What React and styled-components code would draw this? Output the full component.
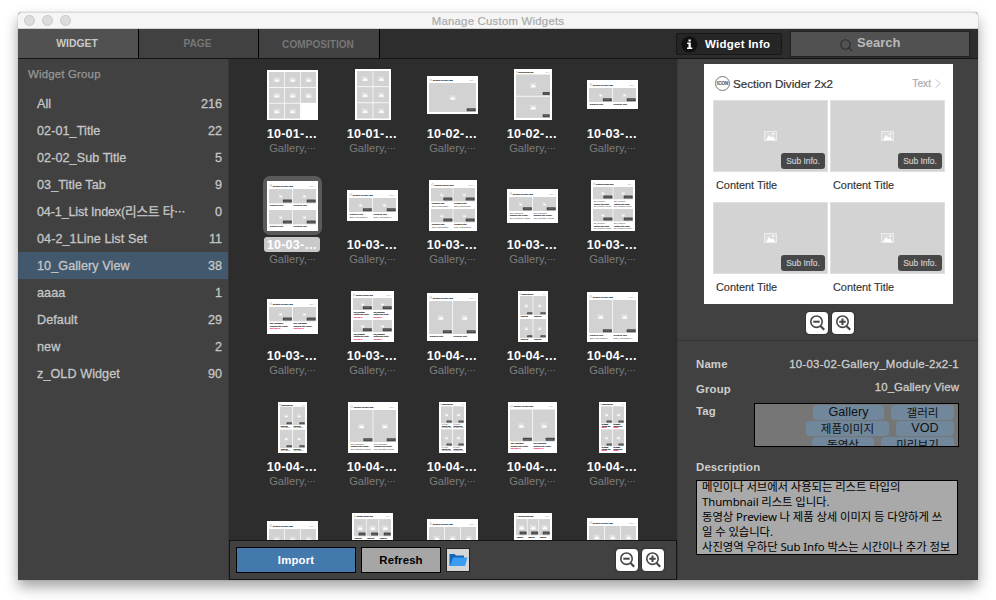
import React from 'react';
import styled, { createGlobalStyle } from 'styled-components';

const Global = createGlobalStyle`
  * { box-sizing: border-box; }
  html, body { margin: 0; background: #fff; }
  body {
    width: 996px; height: 600px; overflow: hidden;
    font-family: "Liberation Sans", "Noto Sans CJK KR", sans-serif;
  }
  svg { display: block; flex: none; }
`;

const Page = styled.div`
  width: 996px; height: 600px; overflow: hidden;
  padding: 12px 18px 20px;
`;
const Window = styled.div`
  height: 568px; display: flex; flex-direction: column;
  background: #414141;
  border-radius: 4px 4px 0 0;
  box-shadow: 0 0 1px rgba(0,0,0,.45), 0 7px 14px rgba(0,0,0,.36);
`;
const TitleBar = styled.header`
  height: 17px; flex: none; display: grid; align-items: center;
  grid-template-columns: 60px 1fr 60px; padding-left: 6px; padding-right: 6px;
  background: #f5f5f5; border-top: 1px solid #dcdcdc; border-bottom: 1px solid #cfd3cf;
  border-radius: 4px 4px 0 0;
`;
const Lights = styled.div`display: flex; gap: 7px;`;
const Light = styled.span`
  width: 11px; height: 11px; border-radius: 50%;
  background: #dcdcdc; border: 1px solid #c8c8c8;
`;
const WindowTitle = styled.div`
  text-align: center; font-size: 11.4px; letter-spacing: .22px; color: #a9a9a9;
  -webkit-text-stroke: .2px; line-height: 14px;
`;
const Toolbar = styled.nav`
  height: 30px; flex: none; display: flex; background: #2d2d2d; border-bottom: 1px solid #161616;
`;
const Tab = styled.div`
  width: ${p => p.$w || 120}px; border-right: 1px solid #000;
  background: ${p => (p.$on ? '#515151' : '#414141')};
  color: ${p => (p.$on ? '#c9c9c9' : '#777')};
  font-weight: bold; font-size: ${p => p.$size || 10.4}px;
  display: flex; align-items: center; justify-content: center;
  padding: ${p => p.$drop || 0}px 2px 0 0;
`;
const InfoButton = styled.div`
  width: 106px; height: 22px; margin: 4px 8px 0 auto; padding-left: 4px;
  display: flex; align-items: center; gap: 7px;
  background: #252525; border: 1px solid #181818; border-radius: 2px;
  color: #fff; font-weight: bold; font-size: 11.5px; letter-spacing: .25px;
`;
const SearchBox = styled.div`
  width: 180px; height: 26px; margin: 2px 8px 0 0; padding-left: 48px;
  display: flex; gap: 4px; background: #515151; border: 1px solid #222;
  color: #bababa; font-weight: bold; font-size: 13px; line-height: 21px;
  svg { margin-top: 6px; }
`;
const Body = styled.div`flex: 1; min-height: 0; display: flex;`;

const Sidebar = styled.aside`width: 211px; flex: none; background: #414141; border-right: 1px solid #383838;`;
const SideTitle = styled.div`
  height: 31px; padding: 0 10px; line-height: 31px; font-size: 11.4px; letter-spacing: .2px;
  color: #989898; -webkit-text-stroke: .25px;
`;
const GroupRow = styled.div`
  height: 27px; padding: 0 6px 0 19px; display: flex; align-items: center; justify-content: space-between;
  background: ${p => (p.$on ? '#41586d' : 'transparent')};
  color: #c6c6c6; font-size: 12.6px; line-height: 16px; white-space: nowrap;
  -webkit-text-stroke: .3px;
`;
const GroupName = styled.span`letter-spacing: ${p => (p.$tight ? -0.14 : 0.08)}px;`;

const Center = styled.main`width: 448px; flex: none; display: flex; flex-direction: column; background: #2d2d2d;`;
const Gallery = styled.div`
  flex: 1; min-height: 0; overflow: hidden; padding: 10px 0 0 38px;
  display: grid; grid-template-columns: repeat(5, 51px); column-gap: 29px; grid-auto-rows: 111px;
`;
const Card = styled.div`display: flex; flex-direction: column; align-items: center;`;
const ThumbSlot = styled.div`
  width: 51px; height: 51px; display: flex; align-items: center; justify-content: center;
  background: ${p => (p.$on ? '#5a5a5a' : 'none')};
  box-shadow: ${p => (p.$on ? '0 0 0 4px #5a5a5a' : 'none')};
  border-radius: 3px; flex: none;
`;
const CardTitle = styled.div`
  width: 56px; height: 15px; margin: 6px 1px 0 0; flex: none; text-align: center;
  line-height: 16px; font-size: 12.6px; letter-spacing: .2px; font-weight: bold; color: #fff; white-space: nowrap;
  background: ${p => (p.$on ? '#c9c9c9' : 'none')}; border-radius: 3px;
`;
const CardSub = styled.div`
  height: 15px; line-height: 15px; font-size: 11.2px; color: #7e7e7e; white-space: nowrap;
  display: flex; align-items: center;
`;
const Dots = styled.span`font-family: "Noto Sans CJK KR", sans-serif; font-size: ${p => p.$size || 9}px; letter-spacing: 0;`;

const Footer = styled.footer`
  height: 40px; flex: none; display: flex; align-items: center; padding: 0 12px 0 6px;
  background: #414141; border: 1px solid #151515;
`;
const Button = styled.div`
  width: ${p => p.$w}px; height: 26px; margin-right: 5px; border: 1px solid #000;
  display: flex; align-items: center; justify-content: center;
  font-weight: bold; font-size: 11.4px; letter-spacing: .15px;
  background: ${p => (p.$primary ? '#4479ad' : '#a6a6a6')};
  color: ${p => (p.$primary ? '#fff' : '#000')};
`;
const FolderButton = styled.div`
  width: 24px; height: 24px; margin-right: auto; border: 1px solid #222; background: #d6d6d6;
  display: flex; align-items: center; justify-content: center;
`;
const ZoomPair = styled.div`display: flex; gap: 4px; justify-content: center; padding-left: ${p => p.$shift || 0}px;`;
const ZoomButton = styled.div`
  width: 22px; height: 22px; background: #fff; border-radius: 4px; box-shadow: 0 0 1px 1px #333;
`;

const Inspector = styled.section`width: 301px; flex: none; display: flex; flex-direction: column; background: #414141; border-left: 1px solid #383838;`;
const PreviewPane = styled.div`height: 282px; flex: none; padding: 5px 25px 0 26px; border-bottom: 1px solid #333;`;
const Preview = styled.div`
  width: 249px; height: 240px; background: #fff; padding: 0 8px 0 9px; margin-bottom: 8px; color: #333;
`;
const PreviewHead = styled.div`
  height: 36px; padding: 3px 4px 0 2px; display: flex; align-items: center; font-size: 11.6px;
  -webkit-text-stroke: .2px;
`;
const PreviewIcon = styled.span`
  width: 15px; height: 15px; border: 1px solid #777; border-radius: 50%; margin-right: 3px;
  font-size: 4.5px; font-weight: bold; display: flex; align-items: center; justify-content: center; color: #666;
`;
const MoreText = styled.span`margin-left: auto; font-size: 10.2px; color: #aaa; display: flex; gap: 4px; align-items: center;`;
const Tiles = styled.div`display: grid; grid-template-columns: 115px 115px; column-gap: 2px; grid-auto-rows: 102px;`;
const TileImage = styled.div`
  position: relative; height: 71.5px; background: #d3d3d3; border: 1px solid #e0e0e0; display: flex;
  align-items: center; justify-content: center;
`;
const Badge = styled.span`
  position: absolute; right: 2px; bottom: 2px; width: 44px; height: 16px; border-radius: 3px;
  background: #474747; color: #ccc; font-size: 8.4px; line-height: 16px; text-align: center;
  -webkit-text-stroke: .2px;
`;
const TileTitle = styled.div`padding-left: 3px; font-size: 10.9px; line-height: 27px; -webkit-text-stroke: .15px;`;

const Details = styled.div`padding: 11px 19px 0 18px;`;
const Field = styled.div`
  height: ${p => p.$h}px; display: flex; justify-content: space-between; align-items: flex-start;
  line-height: 24px;
`;
const Label = styled.div`font-weight: bold; font-size: 11.4px; letter-spacing: .15px; color: #cdcdcd;`;
const Value = styled.div`
  font-size: 11.4px; letter-spacing: ${p => p.$ls || 0.29}px; color: #cdcdcd; -webkit-text-stroke: .3px;
  line-height: ${p => p.$lh || 24}px;
`;
const TagBox = styled.div`
  width: 205px; height: 44px; margin-top: 4px; padding: 1px 4px 0 0; overflow: hidden; border: 1px solid #000; background: #767676;
`;
const TagLine = styled.div`display: flex; justify-content: flex-end; gap: 7px; height: 16px;`;
const Tag = styled.span`
  width: ${p => p.$w}px; height: 15px; border-radius: 4px; background: #70879c; color: #111;
  font-size: ${p => (p.$ko ? 11.6 : 12.6)}px; line-height: 15px; text-align: center; white-space: nowrap;
`;
const Description = styled.div`
  width: 262px; height: 75px; overflow: hidden; border: 1px solid #000; background: #a9a9a9;
  padding-left: 5px; color: #000; white-space: pre; line-height: 15px; font-size: 11.4px;
  letter-spacing: -.1px;
  font-family: "Noto Sans", "Noto Sans CJK KR", sans-serif;
`;
const DescriptionText = styled.div`margin-top: -2px;`;

const ZoomIcon = ({ plus }) => (
  <svg width="22" height="22" viewBox="0 0 22 22" fill="none" stroke="#444">
    <circle cx="10.5" cy="9.7" r="5.7" strokeWidth="1.6" />
    <path d="M14.500 14l3.700 3.800" strokeWidth="2.1" />
    <path d={plus ? 'M7.3 9.7h6.4M10.5 6.5v6.4' : 'M7.3 9.7h6.4'} strokeWidth="2" />
  </svg>
);
const ZoomButtons = ({ shift }) => (
  <ZoomPair $shift={shift}>
    <ZoomButton><ZoomIcon /></ZoomButton>
    <ZoomButton><ZoomIcon plus /></ZoomButton>
  </ZoomPair>
);

const PictureIcon = () => (
  <svg width="13" height="10" viewBox="0 0 13 10">
    <rect x=".5" y=".5" width="12" height="9" fill="#dcdcdc" stroke="#ececec" />
    <path d="M2 9l3-5 2.2 2.6L9 5.3 11.3 9z" fill="#fff" />
    <circle cx="9.3" cy="3" r="1" fill="#fff" />
  </svg>
);

const Thumb = ({ w, h, hd = 0, cols = 2, rows = 1, ch, pitch, lines = 0, pink, skip }) => {
  const top = hd || 2;
  const cw = (w - 4 - (cols - 1) * 0.7) / cols;
  const cells = [];
  for (let r = 0; r < rows; r++) for (let c = 0; c < cols; c++) {
    if (skip && r * cols + c === skip) continue;
    cells.push({ x: 2 + c * (cw + 0.7), y: top + r * (pitch || ch + 0.8) });
  }
  const small = w < 32;
  const bw = small ? 5.3 : w < 42 ? 7 : 9;
  const bh = small ? 2 : 3;
  const step = small ? 1.5 : lines > 2 ? 2.6 : 2.9;
  const words = lines === 3 ? ['Sub_Information', 'Content Title Conte..', 'Sub_Information, Informa'] : ['Content Title', 'Sub_Information'];
  if (pink) words[2] = '100,000 ₩';
  const head = w / 249 * 11.4;
  return (
    <svg width={w} height={h} viewBox={`0 0 ${w} ${h}`} fontFamily="Liberation Sans">
      <rect width={w} height={h} fill="#fff" />
      {hd > 0 && (
        <g>
          <circle cx={w * 0.075} cy={hd * 0.57} r={hd * 0.13} fill="none" stroke="#999" strokeWidth=".4" />
          <text x={w * 0.115} y={hd * 0.57 + 1} fontSize={head} fill="#222" stroke="#222" strokeWidth=".12">Section Divider 2x2</text>
          <text x={w * 0.83} y={hd * 0.57 + 1} fontSize={head * 0.9} fill="#888">Text &gt;</text>
        </g>
      )}
      {cells.map((p, i) => {
        const mx = p.x + cw / 2, my = p.y + ch / 2;
        const k = small || (ch < 15 && hd) ? 0.6 : 1;
        return (
          <g key={i}>
            <rect x={p.x} y={p.y} width={cw} height={ch} fill="#d2d2d2" />
            <rect x={mx - 3 * k} y={my - 2.2 * k} width={6 * k} height={4.8 * k} fill="#e0e0e0" />
            <path d={`M${mx - 2.4 * k} ${my + 2 * k}l${2 * k} ${-2.6 * k} ${1.4 * k} ${k} ${0.9 * k} ${-0.6 * k} ${0.8 * k} ${2.2 * k}z`} fill="#fff" />
            {hd > 0 && (
              <g>
                <rect x={p.x + cw - bw - 0.3} y={p.y + ch - bh - 0.7} width={bw} height={bh} rx=".5" fill="#484848" />
                <rect x={p.x + cw - bw + 1.2} y={p.y + ch - bh / 2 - 1} width={bw - 3} height=".6" fill="#777" />
              </g>
            )}
            {words.slice(0, lines).map((t, n) => {
              const strong = lines === 3 ? n === 1 : n === 0;
              const size = lines === 3 ? (strong ? 0.092 : pink && n === 2 ? 0.095 : 0.079) : 0.105;
              return (
                <text key={t} x={p.x + 0.7} y={p.y + ch + (small ? 1.7 : 2.7) + n * step}
                  fontSize={cw * size} fill={pink && n === 2 ? '#f0306a' : '#222'}
                  stroke={pink && n === 2 ? '#f0306a' : '#222'} strokeWidth={strong || pink ? 0.12 : 0}>
                  {t}
                </text>
              );
            })}
          </g>
        );
      })}
    </svg>
  );
};

const items = [
  ['10-01-…', { w: 51, h: 50, cols: 3, rows: 3, ch: 15, skip: 8 }],
  ['10-01-…', { w: 36, h: 51, cols: 2, rows: 3, ch: 15.3 }],
  ['10-02-…', { w: 51, h: 38, hd: 7, cols: 1, ch: 29 }],
  ['10-02-…', { w: 38, h: 51, hd: 5.5, cols: 1, rows: 2, ch: 21.3 }],
  ['10-03-…', { w: 51, h: 29, hd: 8, ch: 14, lines: 1 }],
  ['10-03-…', { w: 51, h: 50, hd: 8, rows: 2, ch: 14.3, pitch: 21, lines: 1 }],
  ['10-03-…', { w: 51, h: 31, hd: 8, ch: 14, lines: 2 }],
  ['10-03-…', { w: 48, h: 51, hd: 8, rows: 2, ch: 13.3, pitch: 21, lines: 2 }],
  ['10-03-…', { w: 51, h: 34, hd: 8, ch: 14, lines: 3 }],
  ['10-03-…', { w: 44, h: 51, hd: 7, rows: 2, ch: 12.3, pitch: 22, lines: 3 }],
  ['10-03-…', { w: 51, h: 35, hd: 8, ch: 14.3, lines: 3, pink: true }],
  ['10-03-…', { w: 43, h: 51, hd: 7, rows: 2, ch: 12, pitch: 22, lines: 3, pink: true }],
  ['10-04-…', { w: 51, h: 48, hd: 8, ch: 33, lines: 1 }],
  ['10-04-…', { w: 30, h: 51, hd: 5, rows: 2, ch: 19, pitch: 23, lines: 1 }],
  ['10-04-…', { w: 51, h: 50, hd: 8, ch: 33, lines: 2 }],
  ['10-04-…', { w: 29, h: 51, hd: 4.7, rows: 2, ch: 18.3, pitch: 23, lines: 2 }],
  ['10-04-…', { w: 50, h: 51, hd: 8, ch: 32, lines: 3 }],
  ['10-04-…', { w: 27, h: 51, hd: 4.3, rows: 2, ch: 17, pitch: 23, lines: 3 }],
  ['10-04-…', { w: 49, h: 51, hd: 7.5, ch: 32, lines: 3, pink: true }],
  ['10-04-…', { w: 27, h: 51, hd: 4.3, rows: 2, ch: 17, pitch: 23, lines: 3, pink: true }],
  ['10-05-…', { w: 51, h: 35, hd: 8, cols: 3, ch: 20 }],
  ['10-05-…', { w: 41, h: 51, hd: 6, cols: 3, ch: 17.3, pitch: 23, lines: 1 }],
  ['10-05-…', { w: 51, h: 39, hd: 8, cols: 3, ch: 22 }],
  ['10-05-…', { w: 38, h: 51, hd: 6, cols: 3, ch: 16.3, pitch: 23, lines: 1 }],
  ['10-05-…', { w: 51, h: 41, hd: 8, cols: 3, ch: 22 }],
];

const groups = [
  ['All', 216], ['02-01_Title', 22], ['02-02_Sub Title', 5], ['03_Title Tab', 9],
  ['04-1_List Index(리스트 타', 0, true], ['04-2_1Line List Set', 11], ['10_Gallery View', 38],
  ['aaaa', 1], ['Default', 29], ['new', 2], ['z_OLD Widget', 90],
];
const tags = [
  [['Gallery', 71], ['갤러리', 63, true]],
  [['제품이미지', 83, true], ['VOD', 58]],
  [['동영상', 62, true], ['미리보기', 73, true]],
];
const description = `메인이나 서브에서 사용되는 리스트 타입의
Thumbnail 리스트 입니다.
동영상 Preview 나 제품 상세 이미지 등 다양하게 쓰
일 수 있습니다.
사진영역 우하단 Sub Info 박스는 시간이나 추가 정보`;

export default function App() {
  return (
    <Page>
      <Global />
      <Window>
        <TitleBar>
          <Lights><Light /><Light /><Light /></Lights>
          <WindowTitle>Manage Custom Widgets</WindowTitle>
        </TitleBar>
        <Toolbar>
          <Tab $on $w={121}>WIDGET</Tab>
          <Tab $size={10.2}>PAGE</Tab>
          <Tab $w={121} $size={10.1} $drop={2}>COMPOSITION</Tab>
          <InfoButton>
            <svg width="17" height="17" viewBox="0 0 17 17">
              <circle cx="8.5" cy="8.5" r="8" fill="#101010" />
              <path d="M7.5 3.5h2.3v2H7.5zM6.2 6.5h3.6v5h1.5V13H6v-1.500h1.500V8H6.200z" fill="#fff" />
            </svg>
            Widget Info
          </InfoButton>
          <SearchBox>
            <svg width="14" height="14" viewBox="0 0 14 14" fill="none" stroke="#2c2c2c" strokeWidth="1.1">
              <circle cx="6.500" cy="6.500" r="4.700" /><path d="M10 10l3 3" />
            </svg>
            Search
          </SearchBox>
        </Toolbar>
        <Body>
          <Sidebar>
            <SideTitle>Widget Group</SideTitle>
            {groups.map(([name, count, cut]) => (
              <GroupRow key={name} $on={count === 38}>
                <GroupName $tight={cut}>{name}{cut && <Dots $size={11}>⋯</Dots>}</GroupName>
                <span>{count}</span>
              </GroupRow>
            ))}
          </Sidebar>
          <Center>
            <Gallery>
              {items.map(([name, spec], i) => (
                <Card key={i}>
                  <ThumbSlot $on={i === 5}><Thumb {...spec} /></ThumbSlot>
                  {i < 20 && <CardTitle $on={i === 5}>{name}</CardTitle>}
                  {i < 20 && <CardSub>Gallery,<Dots>⋯</Dots></CardSub>}
                </Card>
              ))}
            </Gallery>
            <Footer>
              <Button $primary $w={120}>Import</Button>
              <Button $w={80}>Refresh</Button>
              <FolderButton>
                <svg width="19" height="14" viewBox="0 0 19 14">
                  <path d="M.5 1h5l1.500 1.500H15V11L2 13H.5z" fill="#1565b8" />
                  <path d="M4 4.500h14.500L16 13H1z" fill="#3b9df2" />
                </svg>
              </FolderButton>
              <ZoomButtons />
            </Footer>
          </Center>
          <Inspector>
            <PreviewPane>
              <Preview>
                <PreviewHead>
                  <PreviewIcon>ICON</PreviewIcon>
                  Section Divider 2x2
                  <MoreText>
                    Text
                    <svg width="6" height="9" viewBox="0 0 6 9" fill="none" stroke="#bbb"><path d="M1 .5l4 4-4 4" /></svg>
                  </MoreText>
                </PreviewHead>
                <Tiles>
                  {[0, 1, 2, 3].map(n => (
                    <div key={n}>
                      <TileImage><PictureIcon /><Badge>Sub Info.</Badge></TileImage>
                      <TileTitle>Content Title</TileTitle>
                    </div>
                  ))}
                </Tiles>
              </Preview>
              <ZoomButtons shift={3} />
            </PreviewPane>
            <Details>
              <Field $h={25}><Label>Name</Label><Value>10-03-02-Gallery_Module-2x2-1</Value></Field>
              <Field $h={22}><Label>Group</Label><Value $ls={0.1} $lh={21}>10_Gallery View</Value></Field>
              <Field $h={56}>
                <Label>Tag</Label>
                <TagBox>
                  {tags.map((line, i) => (
                    <TagLine key={i}>{line.map(([t, w, ko]) => <Tag key={t} $w={w} $ko={ko}>{t}</Tag>)}</TagLine>
                  ))}
                </TagBox>
              </Field>
              <Field $h={25}><Label>Description</Label></Field>
              <Description><DescriptionText>{description}</DescriptionText></Description>
            </Details>
          </Inspector>
        </Body>
      </Window>
    </Page>
  );
}
